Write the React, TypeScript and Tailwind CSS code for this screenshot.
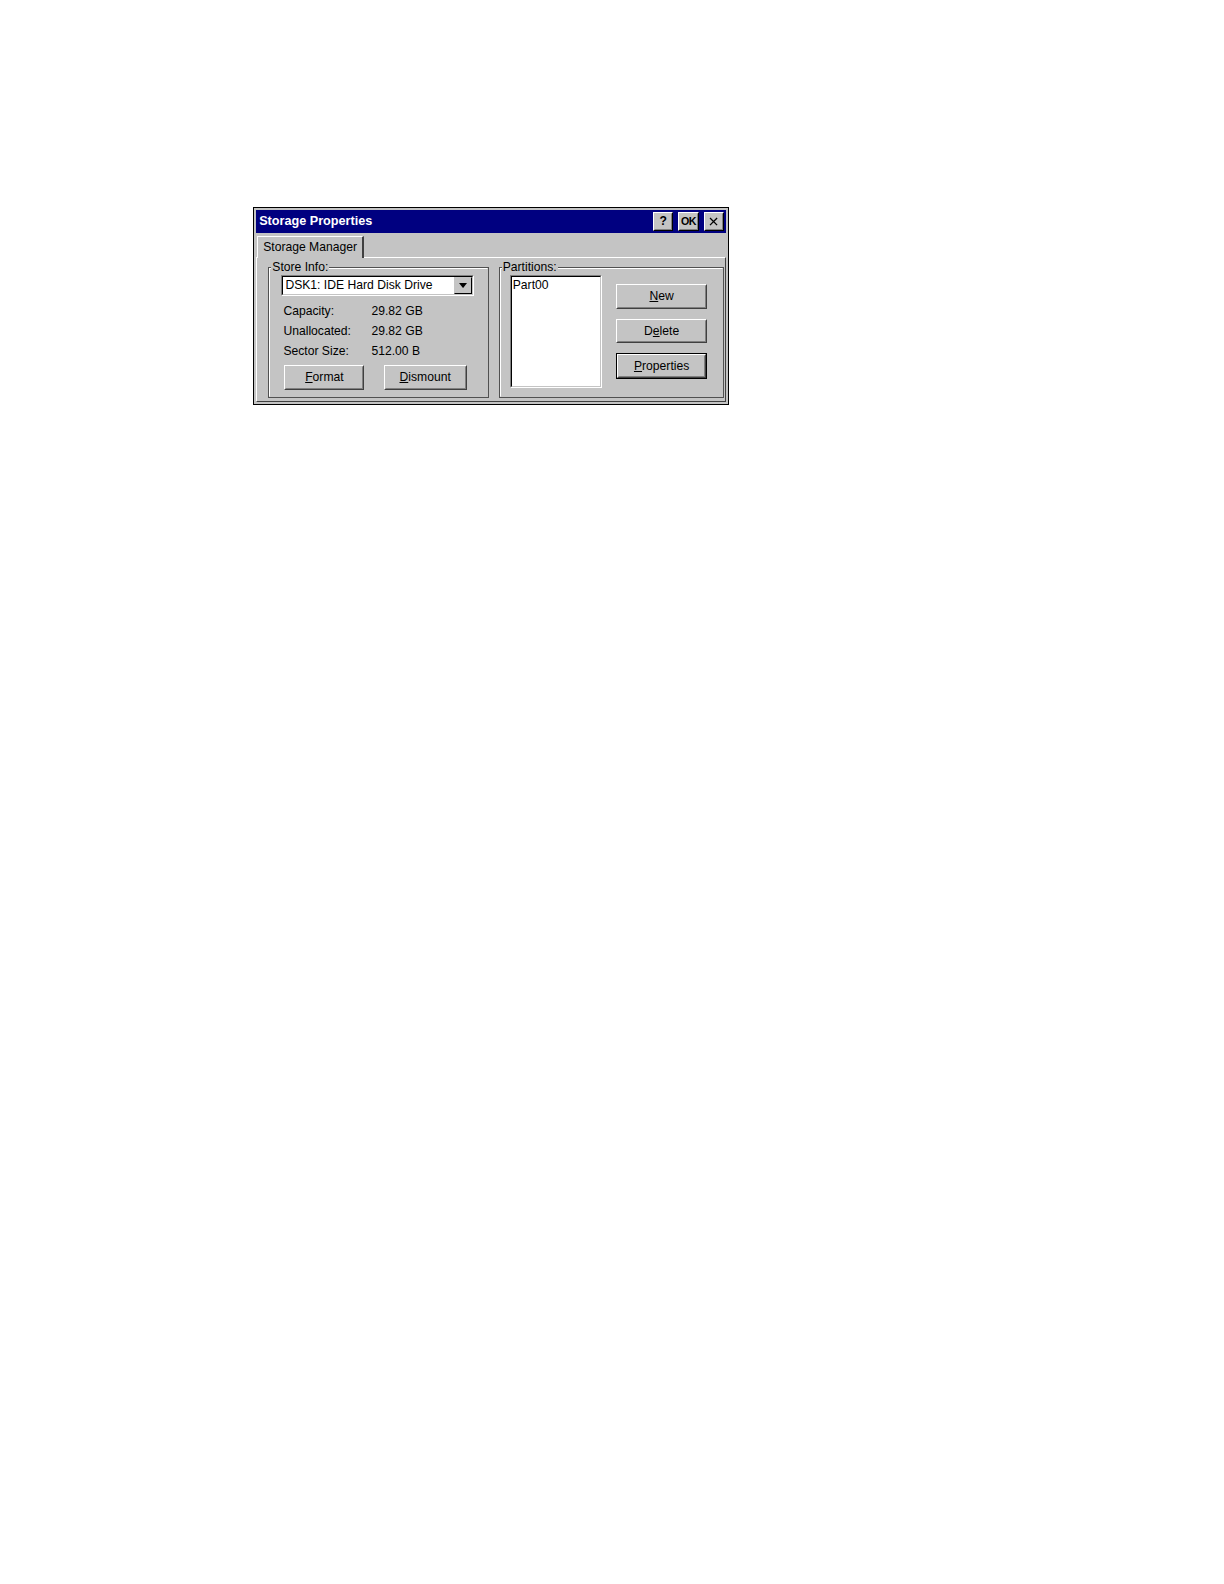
import React from "react";

const font = { fontFamily: '"Liberation Sans", Arial, sans-serif' };

function Btn({ children, w, def = false }: { children: React.ReactNode; w: string; def?: boolean }) {
  return (
    <div className={`${w} ${def ? "border border-black" : ""}`}>
      <div className="h-full border border-t-white border-l-white border-r-[#404040] border-b-[#404040] bg-[#c4c4c4]">
        <div className="h-full flex items-center justify-center border border-transparent border-r-[#808080] border-b-[#808080] text-[12px] text-black">
          {children}
        </div>
      </div>
    </div>
  );
}

function TitleBtn({ children }: { children: React.ReactNode }) {
  return (
    <div className="w-[20px] h-[19px] border border-t-white border-l-white border-r-black border-b-black bg-[#c4c4c4]">
      <div className="h-full flex items-center justify-center border border-transparent border-r-[#808080] border-b-[#808080] text-black font-bold text-[12px] leading-none">
        {children}
      </div>
    </div>
  );
}

function Group({ label, className, children }: { label: string; className: string; children: React.ReactNode }) {
  return (
    <div className={`relative border border-[#505050] ${className}`}>
      <div className="h-full border border-t-white border-l-white border-r-transparent border-b-transparent">
        <div className="h-full">{children}</div>
      </div>
      <div className="absolute -top-[8px] left-[2px] bg-[#c4c4c4] px-[1px] text-[12px] leading-[14px] text-black">{label}</div>
    </div>
  );
}

export default function App() {
  return (
    <div className="[zoom:1.0125] pt-[204px] pl-[250px] pb-[10px]" style={font}>
      <div className="w-[470px] h-[196px] border border-black bg-[#c4c4c4] p-[2px] flex flex-col">
        {/* title bar */}
        <div className="h-[23px] bg-[#000080] flex items-center pl-[3px] pr-[2px]">
          <div className="text-white font-bold text-[12.5px] flex-1">Storage Properties</div>
          <div className="flex gap-[5px]">
            <TitleBtn>?</TitleBtn>
            <TitleBtn><span className="tracking-[-0.5px] text-[10.5px]">OK</span></TitleBtn>
            <TitleBtn>
              <svg width="9" height="9" viewBox="0 0 9 9">
                <path d="M1 1 L8 8 M8 1 L1 8" stroke="black" strokeWidth="1.3" />
              </svg>
            </TitleBtn>
          </div>
        </div>
        {/* tabs */}
        <div className="flex-1 flex flex-col pt-[2px]">
          <div className="flex h-[22px] items-end">
            <div className="h-[22px] ml-[1px] w-[106px] border-t border-l border-white border-r-2 border-r-[#404040] relative z-10 bg-[#c4c4c4] flex items-center pl-[5px] text-[12px] text-black -mb-[1px]">
              Storage Manager
            </div>
          </div>
          <div className="flex-1 border border-t-white border-l-white border-r-[#404040] border-b-[#404040] flex gap-[10px] pl-[11px] pr-[1px] pt-[9px] pb-[3px]">
            <Group label="Store Info:" className="w-[218px]">
              <div className="pl-[11px] pt-[6px]">
                <div className="w-[190px] h-[20px] border border-t-[#808080] border-l-[#808080] border-b-white border-r-white">
                  <div className="h-full border border-t-black border-l-black border-r-[#c4c4c4] border-b-[#c4c4c4] bg-white flex items-center">
                    <div className="flex-1 text-[12px] pl-[2px] text-black">DSK1: IDE Hard Disk Drive</div>
                    <div className="w-[18px] h-full border border-t-[#c4c4c4] border-l-[#c4c4c4] border-r-black border-b-black bg-[#c4c4c4] flex items-center justify-center">
                      <svg width="8" height="5" viewBox="0 0 8 5">
                        <path d="M0 0 H8 L4 5 Z" fill="black" />
                      </svg>
                    </div>
                  </div>
                </div>
                <div className="grid grid-cols-[87px_1fr] text-[12px] text-black mt-[5px] leading-[20px] pl-[2px]">
                  <div>Capacity:</div>
                  <div>29.82 GB</div>
                  <div>Unallocated:</div>
                  <div>29.82 GB</div>
                  <div>Sector Size:</div>
                  <div>512.00 B</div>
                </div>
                <div className="flex gap-[19px] mt-[4px] pl-[3px] h-[24px]">
                  <Btn w="w-[79px]">
                    <span><u>F</u>ormat</span>
                  </Btn>
                  <Btn w="w-[82px]">
                    <span><u>D</u>ismount</span>
                  </Btn>
                </div>
              </div>
            </Group>
            <Group label="Partitions:" className="w-[223px]">
              <div className="flex pl-[9px] pt-[6px]">
                <div className="w-[91px] h-[111px] border border-t-[#808080] border-l-[#808080] border-b-white border-r-white">
                  <div className="h-full border border-t-black border-l-black border-r-[#c4c4c4] border-b-[#c4c4c4] bg-white text-[12px] text-black pl-[1px] leading-[16px]">
                    Part00
                  </div>
                </div>
                <div className="flex flex-col gap-[10px] ml-[14px] mt-[9px]">
                  <div className="h-[24px] flex">
                    <Btn w="w-[90px]">
                      <span><u>N</u>ew</span>
                    </Btn>
                  </div>
                  <div className="h-[24px] flex">
                    <Btn w="w-[90px]">
                      <span>D<u>e</u>lete</span>
                    </Btn>
                  </div>
                  <div className="h-[25px] flex">
                    <Btn w="w-[90px]" def>
                      <span><u>P</u>roperties</span>
                    </Btn>
                  </div>
                </div>
              </div>
            </Group>
          </div>
        </div>
      </div>
    </div>
  );
}
